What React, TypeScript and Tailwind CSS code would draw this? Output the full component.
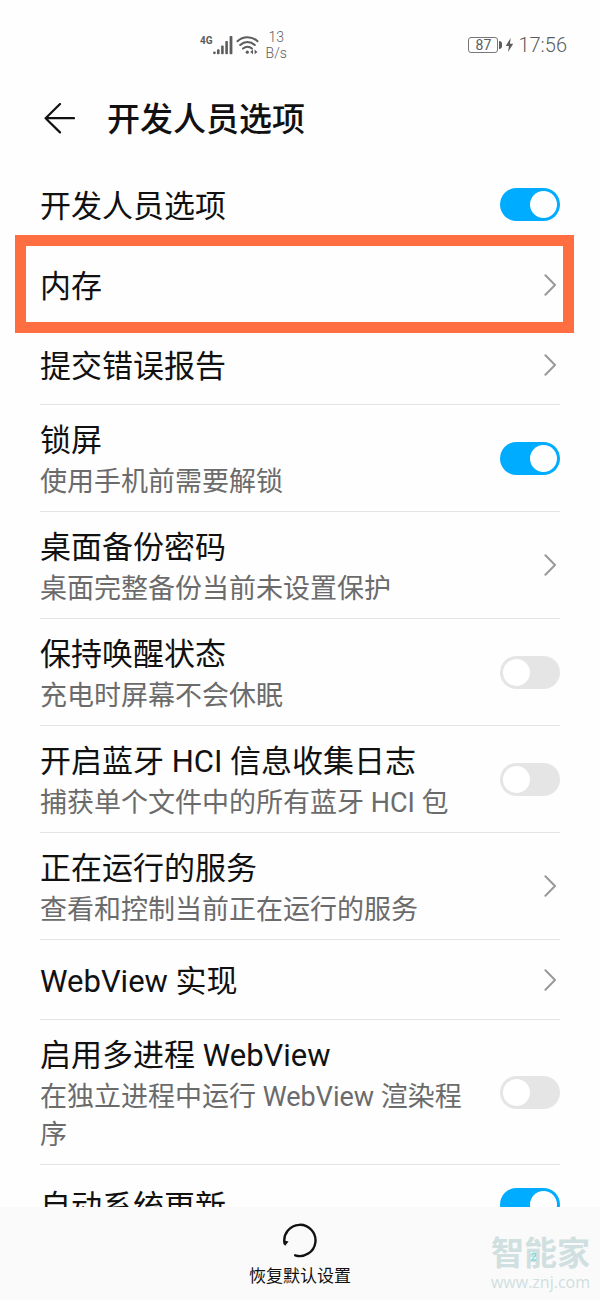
import { useState } from 'react'

type SettingItem = {
	id: string
	label: string
	desc?: string
	type: 'switch' | 'link'
	on?: boolean
	highlight?: boolean
}

const settingList: SettingItem[] = [
	{ id: 'developer', label: '开发人员选项', type: 'switch', on: true },
	{ id: 'memory', label: '内存', type: 'link', highlight: true },
	{ id: 'report', label: '提交错误报告', type: 'link' },
	{ id: 'lock', label: '锁屏', desc: '使用手机前需要解锁', type: 'switch', on: true },
	{ id: 'backup', label: '桌面备份密码', desc: '桌面完整备份当前未设置保护', type: 'link' },
	{ id: 'awake', label: '保持唤醒状态', desc: '充电时屏幕不会休眠', type: 'switch' },
	{ id: 'hci', label: '开启蓝牙 HCI 信息收集日志', desc: '捕获单个文件中的所有蓝牙 HCI 包', type: 'switch' },
	{ id: 'services', label: '正在运行的服务', desc: '查看和控制当前正在运行的服务', type: 'link' },
	{ id: 'webview', label: 'WebView 实现', type: 'link' },
	{ id: 'multi', label: '启用多进程 WebView', desc: '在独立进程中运行 WebView 渲染程序', type: 'switch' },
	{ id: 'update', label: '自动系统更新', type: 'switch', on: true },
]

function StatusBar() {
	return (
		<div className="flex h-[89px] shrink-0 items-center justify-between pl-[200px] pr-[33px] text-[#5c5c5c]">
			<div className="flex items-center">
				<span className="mb-2 text-[10px] font-bold leading-[10px]">4G</span>
				<svg width="20" height="20" viewBox="0 0 20 20" fill="currentColor">
					<circle cx="1.4" cy="17.8" r="1.4" />
					<rect x="4" y="14.2" width="2.6" height="5" rx="0.8" />
					<rect x="8.1" y="10.6" width="2.6" height="8.6" rx="0.8" />
					<rect x="12.3" y="6" width="2.6" height="13.2" rx="0.8" />
					<rect x="16.6" y="1" width="2.8" height="18.2" rx="0.8" />
				</svg>
				<svg className="ml-[3px]" width="23" height="20" viewBox="0 0 23 20" fill="none" stroke="currentColor" strokeWidth="2" strokeLinecap="round">
					<path d="M1.5 6.2C7 .8 16 .8 21.5 6.2" />
					<path d="M4.2 10C8.5 6 14.5 6 18.8 10" />
					<path d="M7 13.6c2.8-2.4 6.2-2.4 9 0" />
					<circle cx="11.3" cy="17.2" r="1.6" fill="currentColor" stroke="none" />
					<path d="M17 14.6v4.6l-2.8-2.3zM18.6 14.6v4.6l2.8-2.3z" fill="currentColor" stroke="none" />
				</svg>
				<span className="ml-[7px] text-center text-[14px] font-light leading-4">
					13
					<br />
					B/s
				</span>
			</div>
			<div className="flex items-center">
				<span className="flex h-4 w-[30px] items-center justify-center rounded-[3px] border border-[#777] text-[14px] leading-4">87</span>
				<span className="ml-px h-2 w-[3px] rounded-r-sm bg-[#5c5c5c]" />
				<svg className="ml-[3px] mr-1" width="9" height="16" viewBox="0 0 9 16" fill="currentColor">
					<path d="M5.6 1 .8 9h3.1l-.8 6L8.2 6.8H5z" />
				</svg>
				<span className="text-[20px] font-light leading-6">17:56</span>
			</div>
		</div>
	)
}

function Chevron() {
	return (
		<svg className="mr-1 shrink-0 text-[#999]" width="12" height="22" viewBox="0 0 12 22" fill="none" stroke="currentColor" strokeWidth="2" strokeLinecap="round" strokeLinejoin="round">
			<path d="M1.4 1.2 11 11 1.4 20.8" />
		</svg>
	)
}

function SettingText({ label, desc }: { label: string; desc?: string }) {
	return (
		<span className="flex-1 pb-[10px] pt-[14px]">
			<span className="block text-[31px] leading-[44px] text-[#111]">{label}</span>
			{desc && <span className="block text-[27px] leading-[38px] text-[#6b6b6b]">{desc}</span>}
		</span>
	)
}

function SettingRow({ item }: { item: SettingItem }) {
	const [checked, setChecked] = useState(!!item.on)
	const { id, label, desc, type, highlight } = item

	return (
		<li className="relative border-b border-[#e4e4e4]">
			{type === 'switch' ? (
				<label htmlFor={id} className="flex min-h-[79px] items-center gap-8">
					<SettingText label={label} desc={desc} />
					<input
						id={id}
						type="checkbox"
						checked={checked}
						onChange={e => setChecked(e.target.checked)}
						className="h-[33px] w-[60px] shrink-0 appearance-none rounded-full bg-[#e5e5e5] p-[3px] before:block before:h-[27px] before:w-[27px] before:rounded-full before:bg-white checked:bg-[#00acff] checked:before:ml-auto"
					/>
				</label>
			) : (
				<button type="button" className="flex min-h-[79px] w-full items-center gap-8 text-left">
					<SettingText label={label} desc={desc} />
					<Chevron />
				</button>
			)}
			{highlight && (
				<span className="pointer-events-none absolute -bottom-[9px] -left-[25px] -right-[14px] -top-[10px] z-10 border-[11px] border-[#ff6e40]" />
			)}
		</li>
	)
}

function Watermark() {
	return (
		<div className="pointer-events-none absolute bottom-2 right-[10px] text-center text-[#d0dfdf]">
			<div className="text-[33px] font-bold leading-9">智能家</div>
			<div className="font-['Open_Sans'] text-[16px] leading-5">www.znj.com</div>
			<svg className="absolute left-10 top-4" width="6" height="9" viewBox="0 0 6 9" fill="none" stroke="#6fdcdc" strokeWidth="1.2" strokeLinecap="round">
				<path d="M1 2.2C2 .4 5 .8 4.6 3 4.2 5 2 5.600 1 8h4" />
			</svg>
		</div>
	)
}

export default function App() {
	return (
		<div className="flex h-screen flex-col bg-[#fefefe] font-['Roboto','Noto_Sans_CJK_SC',sans-serif]">
			<StatusBar />
			<header className="flex h-[59px] shrink-0 items-center gap-8 px-11">
				<button type="button" aria-label="返回" className="text-[#111]">
					<svg width="31" height="32" viewBox="0 0 31 32" fill="none" stroke="currentColor" strokeWidth="2.2" strokeLinecap="round" strokeLinejoin="round">
						<path d="M16 1 1.6 15.200 16 29.400M1.6 15.200H30" />
					</svg>
				</button>
				<h1 className="pt-[2px] text-[33px] font-medium leading-[44px] text-[#111]">开发人员选项</h1>
			</header>
			<main className="min-h-0 flex-1 overflow-y-auto px-10 pt-[17px] [scrollbar-width:none]">
				<ul>
					{settingList.map(item => (
						<SettingRow key={item.id} item={item} />
					))}
				</ul>
			</main>
			<footer className="relative flex h-[93px] shrink-0 justify-center bg-[#fafafa]">
				<button type="button" className="flex flex-col items-center pt-4 text-[#111]">
					<svg width="36" height="36" viewBox="0 0 36 36" fill="none" stroke="currentColor" strokeWidth="2.4" strokeLinecap="round">
						<path d="M2.6 20.5A15.6 15.6 0 1 1 13.2 32.3" />
						<path d="M1.2 17.2 6.6 18.4 3 23z" fill="currentColor" stroke="none" />
					</svg>
					<span className="mt-[5px] text-[17px] leading-6">恢复默认设置</span>
				</button>
				<Watermark />
			</footer>
		</div>
	)
}
